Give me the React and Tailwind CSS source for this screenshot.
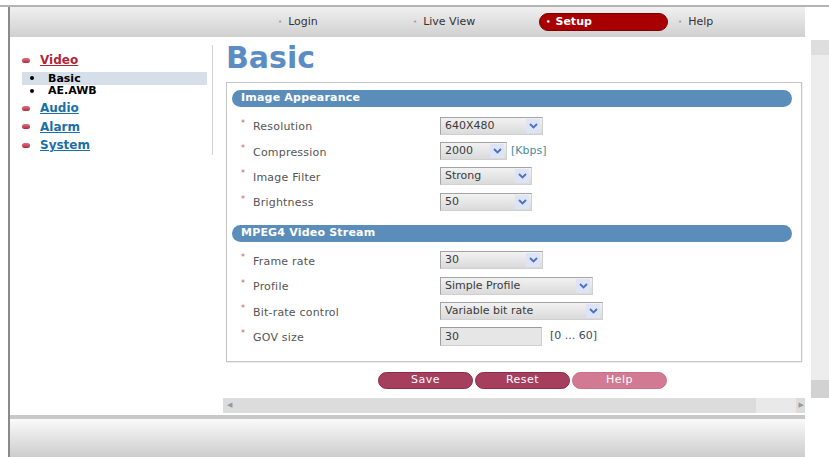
import React from 'react';

const FONT = { fontFamily: '"DejaVu Sans", Verdana, sans-serif' };

// Small chevron used in the select boxes
const Chevron = () => (
  <svg width="9" height="6" viewBox="0 0 9 6">
    <path d="M1 1 L4.5 4.5 L8 1" fill="none" stroke="#4d6fc4" strokeWidth="1.8" />
  </svg>
);

const Select = ({ value, width }) => (
  <div
    className="flex h-[18px] items-stretch border border-[#a4a4a4] border-r-[#d0d0d0] border-b-[#d0d0d0] bg-gradient-to-b from-[#f2f2f2] to-[#dadada]"
    style={{ width }}
  >
    <span className="flex-1 pl-[4px] text-[11px] leading-[16px] text-[#3a3a3a]">{value}</span>
    <span className="my-[1px] mr-[2px] flex w-[14px] items-center justify-center bg-[#dde4f5]">
      <Chevron />
    </span>
  </div>
);

const Row = ({ label, children }) => (
  <div className="flex h-[25.3px] items-center">
    <div className="flex w-[213px] items-center pl-[14px]">
      <span className="mr-[8px] -mt-[4px] text-[8px] text-[#c06070]">*</span>
      <span className="mt-[4px] text-[11px] tracking-[0.2px] text-[#555]">{label}</span>
    </div>
    {children}
  </div>
);

const SectionBar = ({ title }) => (
  <div className="ml-[5px] mr-[9px] flex h-[17px] items-center rounded-full bg-[#5b8dbb] pl-[9px]">
    <span className="text-[11px] font-bold tracking-[0.2px] text-white">{title}</span>
  </div>
);

const NavItem = ({ label, width }) => (
  <div className="flex items-center text-[11px] text-[#333]" style={{ width }}>
    <span className="mr-[6px] text-[7px] text-[#999]">•</span>
    {label}
  </div>
);

const SideLink = ({ label, active }) => (
  <div className="flex h-[18.5px] items-center">
    <span className="mr-[10px] h-[5px] w-[8px] rounded-full bg-gradient-to-b from-[#e07080] to-[#b02838]" />
    <span
      className={`text-[12px] font-bold underline ${active ? 'text-[#b02838]' : 'text-[#1a6fa8]'}`}
    >
      {label}
    </span>
  </div>
);

const SubLink = ({ label, selected }) => (
  <div className={`mr-[5px] flex h-[12.5px] items-center pl-[8px] ${selected ? 'bg-[#d6dfe9]' : ''}`}>
    <span className="h-[4px] w-[4px] rounded-full bg-black" />
    <span className="ml-[14px] text-[11px] font-bold leading-none text-black">{label}</span>
  </div>
);

const Btn = ({ label, light }) => (
  <div
    className={`flex h-[17px] w-[95px] items-center justify-center rounded-full border text-[11px] tracking-[0.5px] text-white ${
      light ? 'border-[#c86f88] bg-[#d27a94]' : 'border-[#8c2c48] bg-[#a63e5e]'
    }`}
  >
    {label}
  </div>
);

export default function App() {
  return (
    <div className="h-[457px] w-[829px] overflow-hidden bg-white" style={FONT}>
      <div className="h-[5px]" />
      <div className="h-[2px] bg-[#b4b4b4]" />
      <div className="flex h-[450px]">
        <div className="w-[8px]" />
        <div className="w-[2px] bg-[#8a8a8a]" />

        {/* main column */}
        <div className="flex w-[795px] flex-col">
          {/* top navigation */}
          <div className="flex h-[30px] items-center bg-gradient-to-b from-[#f0f0f0] to-[#d0d0d0] pl-[268px]">
            <NavItem label="Login" width={135} />
            <NavItem label="Live View" width={126} />
            <div className="flex h-[18px] w-[129px] items-center rounded-full border border-[#7a0000] bg-[#a80000] pl-[6px] text-[11px] font-bold text-white">
              <span className="mr-[5px] text-[7px]">•</span>
              Setup
            </div>
            <div className="ml-[10px]">
              <NavItem label="Help" width={60} />
            </div>
          </div>

          {/* content */}
          <div className="flex h-[361px]">
            <div className="mt-[8px] h-[110px] w-[203px] self-start border-r border-[#d0d0d0] pl-[12px] pt-[6px]">
              <SideLink label="Video" active />
              <div className="mt-[2.5px]">
                <SubLink label="Basic" selected />
                <SubLink label="AE.AWB" />
              </div>
              <div className="mt-[2px]">
                <SideLink label="Audio" />
                <SideLink label="Alarm" />
                <SideLink label="System" />
              </div>
            </div>

            <div className="flex flex-1 flex-col pl-[13px] pt-[5.5px]">
              <div className="h-[30px] text-[30px] font-bold leading-[30px] text-[#5b8dc4]">Basic</div>

              <div className="mt-[9.5px] w-[576px] border border-[#c4c4c4] pb-[12px] pt-[7px] shadow-[1px_1px_1px_rgba(0,0,0,0.06)]">
                <SectionBar title="Image Appearance" />
                <div className="mt-[6px]">
                  <Row label="Resolution">
                    <Select value="640X480" width={103} />
                  </Row>
                  <Row label="Compression">
                    <Select value="2000" width={67} />
                    <span className="ml-[4px] text-[11px] text-[#4a8a9c]">[Kbps]</span>
                  </Row>
                  <Row label="Image Filter">
                    <Select value="Strong" width={92} />
                  </Row>
                  <Row label="Brightness">
                    <Select value="50" width={92} />
                  </Row>
                </div>

                <div className="mt-[11px]">
                  <SectionBar title="MPEG4 Video Stream" />
                </div>
                <div className="mt-[5.5px]">
                  <Row label="Frame rate">
                    <Select value="30" width={103} />
                  </Row>
                  <Row label="Profile">
                    <Select value="Simple Profile" width={153} />
                  </Row>
                  <Row label="Bit-rate control">
                    <Select value="Variable bit rate" width={163} />
                  </Row>
                  <Row label="GOV size">
                    <div className="h-[19px] w-[102px] border border-[#9c9c9c] border-r-[#d0d0d0] border-b-[#d0d0d0] bg-[#e6e6e6] pl-[4px] text-[11px] leading-[17px] text-[#3a3a3a]">
                      30
                    </div>
                    <span className="ml-[8px] text-[11px] text-[#3f4a58]">[0 ... 60]</span>
                  </Row>
                </div>
              </div>

              <div className="ml-[152px] mt-[10px] flex gap-[2px]">
                <Btn label="Save" />
                <Btn label="Reset" />
                <Btn label="Help" light />
              </div>
            </div>
          </div>

          {/* horizontal scrollbar */}
          <div className="flex h-[15px]">
            <div className="w-[213px]" />
            <div className="flex flex-1 items-center bg-[#dcdcdc]">
              <span className="ml-[4px] text-[7px] text-[#999]">◀</span>
              <div className="flex-1" />
              <div className="h-full w-[40px] bg-[#e9e9e9]" />
              <span className="ml-[3px] mr-[1px] text-[7px] text-[#999]">▶</span>
            </div>
          </div>
          <div className="h-[2px]" />
          <div className="h-[4px] bg-[#c8c8c8]" />
          <div className="flex-1 bg-gradient-to-b from-[#fafafa] to-[#cdcdcd]" />
        </div>

        {/* vertical scrollbar */}
        <div className="ml-[6px] flex w-[18px] flex-col pt-[33px]">
          <div className="h-[15px] bg-[#dedede]" />
          <div className="h-[325px] bg-[#ededed]" />
          <div className="h-[18px] bg-[#d2d2d2]" />
        </div>
      </div>
    </div>
  );
}
